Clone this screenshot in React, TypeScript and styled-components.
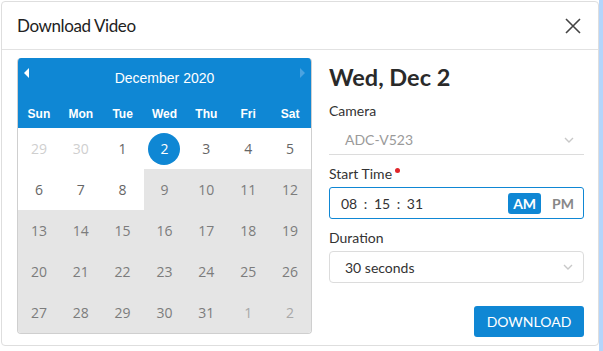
import styled, { createGlobalStyle } from 'styled-components'

const GlobalStyle = createGlobalStyle`
  html, body {
    margin: 0;
    padding: 0;
    background: #fff;
    font-family: Lato, 'Liberation Sans', sans-serif;
    color: #333;
  }
`

interface Day {
  label: number
  outside?: boolean
  disabled?: boolean
  selected?: boolean
}

const weekdays = ['Sun', 'Mon', 'Tue', 'Wed', 'Thu', 'Fri', 'Sat']

const buildWeeks = (): Day[][] => {
  const days: Day[] = [{ label: 29, outside: true }, { label: 30, outside: true }]
  for (let d = 1; d <= 31; d++) {
    days.push({ label: d, disabled: d > 8, selected: d === 2 })
  }
  days.push({ label: 1, outside: true, disabled: true }, { label: 2, outside: true, disabled: true })
  const weeks: Day[][] = []
  for (let i = 0; i < days.length; i += 7) weeks.push(days.slice(i, i + 7))
  return weeks
}

const Chevron = () => (
  <ChevronIcon width="10" height="6" viewBox="0 0 10 6">
    <path d="M1 1l4 4 4-4" fill="none" stroke="#c8c8c8" strokeWidth="1.4" />
  </ChevronIcon>
)

export default function App() {
  const weeks = buildWeeks()

  return (
    <>
      <GlobalStyle />
      <Page>
        <Modal>
          <Header>
            <Title>Download Video</Title>
            <CloseButton aria-label="Close">
              <svg width="16" height="16" viewBox="0 0 16 16">
                <path d="M1 1l14 14M15 1L1 15" stroke="#444" strokeWidth="1.6" />
              </svg>
            </CloseButton>
          </Header>

          <Body>
            <Calendar>
              <CalendarHead>
                <MonthRow>
                  <Arrow>
                    <svg width="5" height="10" viewBox="0 0 5 10">
                      <path d="M5 0v10L0 5z" fill="#fff" />
                    </svg>
                  </Arrow>
                  <MonthTitle>December 2020</MonthTitle>
                  <Arrow>
                    <svg width="5" height="10" viewBox="0 0 5 10">
                      <path d="M0 0v10l5-5z" fill="#4ba3e0" />
                    </svg>
                  </Arrow>
                </MonthRow>
                <WeekRow>
                  {weekdays.map((w) => (
                    <WeekDay key={w}>{w}</WeekDay>
                  ))}
                </WeekRow>
              </CalendarHead>
              <Grid>
                {weeks.flat().map((day, i) => (
                  <Cell key={i} $disabled={day.disabled}>
                    <DayNumber $outside={day.outside} $disabled={day.disabled} $selected={day.selected}>
                      {day.label}
                    </DayNumber>
                  </Cell>
                ))}
              </Grid>
            </Calendar>

            <Form>
              <DateTitle>Wed, Dec 2</DateTitle>

              <Field>
                <Label>Camera</Label>
                <UnderlineSelect>
                  <span>ADC-V523</span>
                  <Chevron />
                </UnderlineSelect>
              </Field>

              <Field>
                <Label>
                  Start Time <Required />
                </Label>
                <TimeBox>
                  <TimeText>08 : 15 : 31</TimeText>
                  <Meridiem>
                    <MeridiemOption $active>AM</MeridiemOption>
                    <MeridiemOption>PM</MeridiemOption>
                  </Meridiem>
                </TimeBox>
              </Field>

              <Field>
                <Label>Duration</Label>
                <BoxSelect>
                  <span>30 seconds</span>
                  <Chevron />
                </BoxSelect>
              </Field>

              <Actions>
                <PrimaryButton>DOWNLOAD</PrimaryButton>
              </Actions>
            </Form>
          </Body>
        </Modal>
        <Strip />
      </Page>
    </>
  )
}

const Page = styled.div`
  display: flex;
  height: 351px;
  padding-top: 1px;
  padding-left: 1px;
  box-sizing: border-box;
`

const Modal = styled.div`
  width: 598px;
  height: 345px;
  box-sizing: border-box;
  border: 1px solid #dedede;
  border-radius: 4px;
  background: #fff;
  display: flex;
  flex-direction: column;
`

const Strip = styled.div`
  width: 4px;
  margin-top: -1px;
  height: 351px;
  background: #b4d5fb;
`

const Header = styled.div`
  height: 47px;
  display: flex;
  align-items: center;
  justify-content: space-between;
  padding: 0 17px 0 15px;
  border-bottom: 1px solid #e2e2e2;
`

const Title = styled.h4`
  margin: 0;
  font-size: 17px;
  letter-spacing: -0.4px;
  font-weight: 400;
  color: #222;
`

const CloseButton = styled.button`
  border: 0;
  background: none;
  padding: 0;
  display: flex;
`

const Body = styled.div`
  display: flex;
  gap: 17px;
  padding: 8px 14px 0 15px;
`

const Calendar = styled.div`
  width: 295px;
  height: 276px;
  box-sizing: border-box;
  border: 1px solid #cfcfcf;
  border-top: 0;
  border-radius: 4px;
  overflow: hidden;
  background: #fff;
  display: flex;
  flex-direction: column;
`

const CalendarHead = styled.div`
  background: #0f87d4;
  color: #fff;
`

const MonthRow = styled.div`
  height: 40px;
  display: flex;
  align-items: center;
  justify-content: space-between;
  padding: 0 6px;
  box-sizing: border-box;
`

const Arrow = styled.span`
  display: flex;
  align-self: flex-start;
  margin-top: 10px;
`

const MonthTitle = styled.div`
  font-family: 'Liberation Sans', Arial, sans-serif;
  font-size: 14px;
`

const WeekRow = styled.div`
  height: 30px;
  display: grid;
  grid-template-columns: repeat(7, 1fr);
  align-items: center;
`

const WeekDay = styled.div`
  text-align: center;
  font-family: 'Liberation Sans', Arial, sans-serif;
  font-weight: 700;
  font-size: 12px;
  margin-top: 1px;
`

const Grid = styled.div`
  flex: 1;
  display: grid;
  grid-template-columns: repeat(7, 1fr);
  grid-template-rows: repeat(5, 1fr);
`

const Cell = styled.div<{ $disabled?: boolean }>`
  display: flex;
  align-items: center;
  justify-content: center;
  background: ${({ $disabled }) => ($disabled ? '#e5e5e5' : '#fff')};
`

const DayNumber = styled.span<{ $outside?: boolean; $disabled?: boolean; $selected?: boolean }>`
  width: 32px;
  height: 32px;
  border-radius: 50%;
  display: flex;
  align-items: center;
  justify-content: center;
  font-family: 'Open Sans', sans-serif;
  font-size: 14px;
  background: ${({ $selected }) => ($selected ? '#0f87d4' : 'transparent')};
  color: ${({ $selected, $outside, $disabled }) =>
    $selected ? '#fff' : $outside && !$disabled ? '#cfcfcf' : $outside ? '#a8a8a8' : $disabled ? '#7c7c7c' : '#666'};
`

const Form = styled.div`
  flex: 1;
  display: flex;
  flex-direction: column;
`

const DateTitle = styled.h2`
  margin: 4px 0 0;
  font-size: 23.5px;
  font-weight: 700;
  color: #2a2a2a;
  line-height: 30px;
`

const Field = styled.div`
  display: flex;
  flex-direction: column;
  margin-top: 9px;
`

const Label = styled.label`
  font-size: 14px;
  color: #333;
  line-height: 20px;
  display: flex;
  align-items: flex-start;
  gap: 3px;
`

const Required = styled.span`
  width: 5px;
  height: 5px;
  border-radius: 50%;
  background: #e0262b;
  margin-top: 4px;
`

const ChevronIcon = styled.svg`
  flex: none;
`

const UnderlineSelect = styled.div`
  height: 30px;
  box-sizing: border-box;
  margin-top: 4px;
  display: flex;
  align-items: center;
  justify-content: space-between;
  padding: 0 10px 0 16px;
  border-bottom: 1px solid #dcdcdc;
  font-size: 14px;
  color: #9a9a9a;
`

const TimeBox = styled.div`
  height: 32px;
  margin-top: 3px;
  box-sizing: border-box;
  border: 1px solid #0f87d4;
  border-radius: 3px;
  display: flex;
  align-items: center;
  justify-content: space-between;
  padding: 0 4px 0 11px;
`

const TimeText = styled.span`
  font-size: 14px;
  word-spacing: 3px;
  color: #333;
`

const Meridiem = styled.div`
  display: flex;
  gap: 6px;
`

const MeridiemOption = styled.span<{ $active?: boolean }>`
  padding: 2px 5px;
  line-height: 17px;
  border-radius: 3px;
  font-weight: 700;
  font-size: 14px;
  background: ${({ $active }) => ($active ? '#0f87d4' : 'transparent')};
  color: ${({ $active }) => ($active ? '#fff' : '#888')};
`

const BoxSelect = styled.div`
  height: 32px;
  margin-top: 3px;
  box-sizing: border-box;
  border: 1px solid #dcdcdc;
  border-radius: 4px;
  display: flex;
  align-items: center;
  justify-content: space-between;
  padding: 0 10px 0 15px;
  font-size: 14px;
  color: #333;
`

const Actions = styled.div`
  display: flex;
  justify-content: flex-end;
  margin-top: 23px;
`

const PrimaryButton = styled.button`
  width: 110px;
  height: 31px;
  border: 0;
  border-radius: 3px;
  background: #0f87d4;
  color: #fff;
  font-family: Lato, sans-serif;
  font-size: 14px;
`
